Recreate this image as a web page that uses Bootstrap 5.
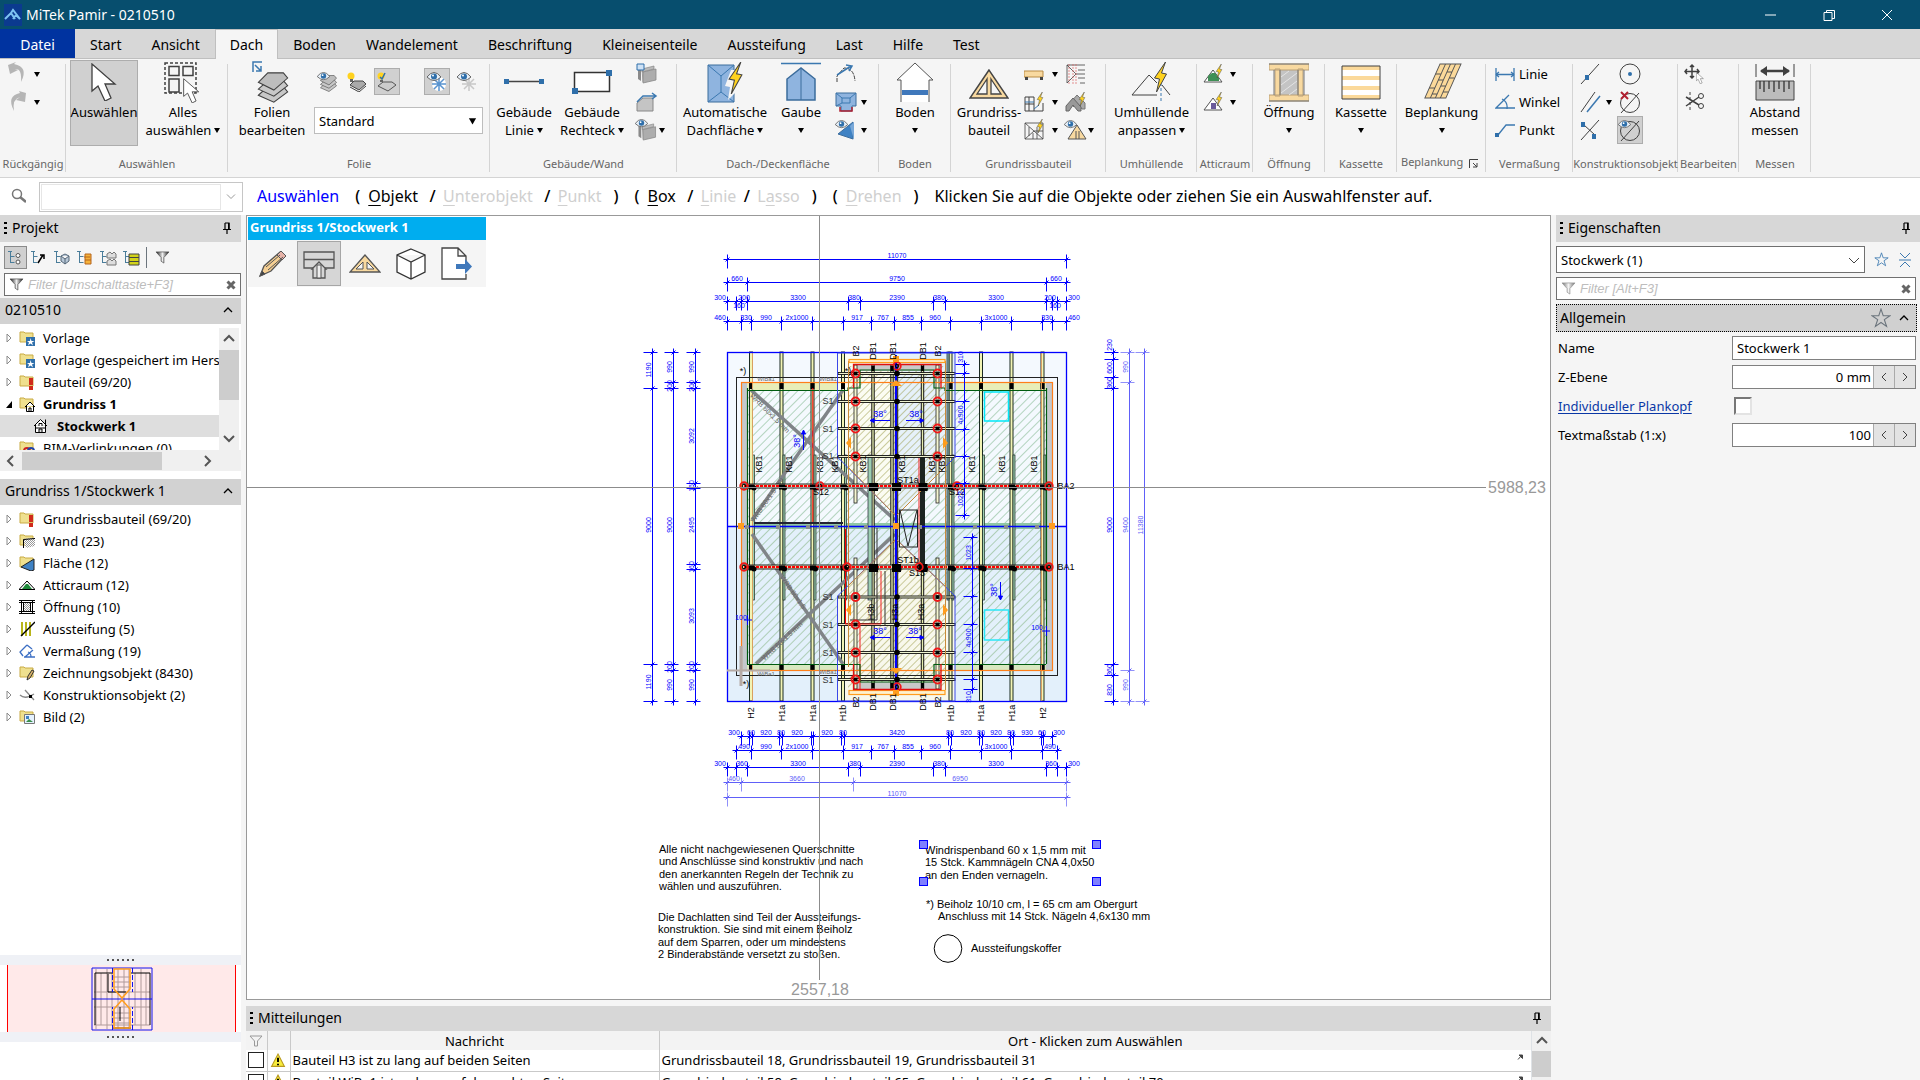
<!DOCTYPE html>
<html lang="de">
<head>
<meta charset="utf-8">
<meta name="viewport" content="width=device-width, initial-scale=1">
<title>MiTek Pamir - 0210510</title>
<link href="https://cdn.jsdelivr.net/npm/bootstrap@5.3.0/dist/css/bootstrap.min.css" rel="stylesheet">
<style>
  :root { --line:#808080; --bar:#d7d7d7; --pane:#f5f5f5; }
  body { font-family:"Noto Sans","Open Sans",sans-serif; font-size:13px; line-height:18px; color:#000; background:var(--pane); }
  button { color:inherit; font:inherit; background:none; border:1px solid transparent; padding:0; }
  svg { display:block; flex:none; }
  .k { fill:none; stroke:#404040; }
  .b { fill:none; stroke:#3b78b0; }
  .titlebar { background:#074e6e; color:#fff; height:29px; font-size:14px; }
  .titlebar button { width:58px; height:29px; }
  .tabstrip { background:var(--bar); height:30px; border-bottom:1px solid #bfbfbf; font-size:14px; }
  .tabstrip a { color:#000; text-decoration:none; padding:0 15px; line-height:31px; height:30px; border:0 solid #bfbfbf; }
  .tabstrip a.file { background:#0033a0; color:#fff; width:75px; height:29px; padding:0; text-align:center; }
  .tabstrip a.on { background:var(--pane); border-width:1px 1px 0; line-height:29px; padding:0 14px; }
  .ribbon { height:119px; border-bottom:1px solid #d4d4d4; }
  .grp { flex:none; background:linear-gradient(#d4d4d4,#d4d4d4) right 5px/1px 108px no-repeat; }
  .grp-body { height:96px; padding-top:1px; }
  .grp-name { color:#666; font-size:11px; text-align:center; white-space:nowrap; }
  .grp-name.with-launch { line-height:14px; }
  .big { display:flex; flex-direction:column; align-items:center; height:86px; white-space:nowrap; text-align:center; }
  .big.on, .sm.on, .ico.on { background:#d0d0d0; border-color:#adadad; }
  .sm { height:28px; display:flex; align-items:center; justify-content:center; width:26px; }
  .ico { width:26px; height:27px; display:flex; align-items:center; justify-content:center; }
  .dd { display:inline-block; border:3px solid transparent; border-top:5px solid #000; border-bottom:0; vertical-align:2px; margin-left:3px; }
  .dd.solo { margin:7px 0 0; }
  .g1 { width:66px } .g2 { width:162px } .g3 { width:262px } .g4 { width:187px } .g5 { width:202px } .g6 { width:72px }
  .g7 { width:155px } .g8 { width:91px } .g9 { width:56px } .g12 { width:89px } .g13 { width:87px } .g14 { width:105px } .g15 { width:61px }
  .g3 .grp-body { padding-left:10px }
  .w48 { width:48px } .w68 { width:68px } .w82 { width:82px } .w88 { width:88px }
  .folie { width:169px; height:27px; border:1px solid #bdbdbd; border-radius:0; font-size:13px; padding:0 4px; line-height:18px; color:#000;
    --bs-form-select-bg-img:url("data:image/svg+xml,%3Csvg xmlns='http://www.w3.org/2000/svg' viewBox='0 0 10 8'%3E%3Cpath d='M1 1h8L5 8z'/%3E%3C/svg%3E"); background-size:9px 8px; background-position:right 5px center; }
  .cmd { height:37px; background:#fff; font-size:16px; padding-bottom:2px; }
  .cmd .mode { color:#0000ff; }
  .cmd .dim { color:#cfcfcf; }
  .cmd u { text-underline-offset:3px; }
  .cmd .par { width:21px; text-align:center; font-weight:500; }
  .finder { width:204px; height:30px; border:1px solid #c6c6c6; padding:1px; margin:2px 14px 0 13px; }
  .finder input { border:1px solid #e6e6e6; width:180px; outline:0; }
  .dock-l { width:246px; flex:none; padding-right:5px; }
  .dock-r { width:364px; flex:none; margin-left:5px; }
  .phead { height:27px; background:var(--bar); font-size:14px; padding:0 10px 2px 4px; }
  .grip { width:3px; height:12px; margin-right:5px; background:repeating-linear-gradient(#000 0 2px,transparent 2px 5px); }
  .tb { width:23px; height:23px; display:flex; align-items:center; justify-content:center; }
  .tb.on { background:#d0d0d0; border-color:#8a8a8a; }
  .filterbox { height:23px; border:1px solid #707070; background:#fff; padding:0 4px; }
  .filterbox input { border:0; outline:0; font:italic 13px "Liberation Sans",Arial,sans-serif; flex:1; min-width:0; padding:0; }
  .filterbox input::placeholder { color:#bdbdbd; opacity:1; }
  .sec { height:26px; background:#d2d2d2; font-size:14px; padding:0 8px 2px 5px; }
  .tree { background:#fff; }
  .tree ul { padding-top:3px; }
  .tree li { height:22px; display:flex; align-items:center; white-space:nowrap; padding-left:6px; }
  .tree li > svg + svg { margin:0 8px 0 7px; }
  .tree .sel { background:#dedede; padding-left:33px; font-weight:700; }
  .tree .sel svg { margin-right:8px; }
  .treetop { height:126px; overflow:hidden; width:219px; }
  .hbar { height:21px; background:#f0f0f0; }
  .hbar .thumb { width:140px; height:18px; }
  .vbar { width:20px; background:#f0f0f0; }
  .thumb { background:#cdcdcd; }
  .split { height:10px; background:#eff1f6; }
  .split i { width:28px; height:2px; background:repeating-linear-gradient(90deg,#555 0 2px,transparent 2px 5px); }
  .mini { background:#ffe9e9; border:solid #f00; border-width:0 1px; height:67px; margin:0 5px 0 7px; }
  .tail { height:38px; }
  .cad { border:1px solid #999; background:#fff; min-height:0; position:relative; overflow:hidden; }
  .cad > svg { width:100%; height:100%; }
  .floatbar { position:absolute; left:1px; top:1px; width:238px; background:var(--pane); }
  .floatbar .cap { background:#00adef; color:#fff; font-weight:700; height:23px; line-height:20px; padding-left:2px; }
  .floatbar .tools { padding-left:2px; }
  .floatbar button { width:44px; height:45px; margin:1px; display:flex; align-items:center; justify-content:center; }
  .floatbar .on { background:#d6d6d6; border-color:#a6a6a6; }
  .cad text { font-family:"Liberation Sans",Arial,sans-serif; }
  .msgs { height:74px; margin-top:6px; flex:none; overflow:hidden; }
  .msgs .phead { height:25px; padding-bottom:1px; }
  .msgtab { width:100%; table-layout:fixed; border-collapse:collapse; font-size:13px; }
  .msgtab th { font-weight:400; text-align:center; height:19px; line-height:18px; background:#f3f3f3; padding:0; }
  .msgtab td { height:21px; line-height:20px; background:#fff; border-bottom:1px solid #c9c9c9; padding:0 0 0 2px; white-space:nowrap; }
  .msgtab th + th, .msgtab td + td { border-left:1px solid #c9c9c9; }
  .msgtab input, .plan { appearance:none; width:16px; height:16px; border:1px solid #222; background:#fff; display:block; margin:0; border-radius:0; }
  .c1 { width:21px } .c2 { width:23px } .c3 { width:369px }
  .plan { width:18px; height:18px; border:2px solid; border-color:#777 #e3e3e3 #e3e3e3 #777; margin-left:2px; }
  .objsel { height:27px; border:1px solid #707070; border-radius:0; font-size:13px; line-height:18px; padding:0 4px; color:#000; background-size:12px 12px; background-position:right 4px center;
    --bs-form-select-bg-img:url("data:image/svg+xml,%3Csvg xmlns='http://www.w3.org/2000/svg' viewBox='0 0 12 12'%3E%3Cpath d='M1 4l5 5 5-5' fill='none' stroke='%23444'/%3E%3C/svg%3E"); }
  .props { padding:0 4px 0 2px; row-gap:5px; display:grid; grid-template-columns:174px 1fr; align-items:center; grid-auto-rows:24px; margin-top:4px; }
  .props .fld { height:24px; border:1px solid #808080; background:#fff; min-width:0; }
  .props .fld input { border:0; outline:0; padding:0 4px; flex:1; min-width:0; background:none; }
  .props .num input { text-align:right; padding-right:2px; }
  .props .num button { width:21px; background:#e3e3e3; border:0; border-left:1px solid #aaa; height:22px; display:flex; align-items:center; justify-content:center; }
  .props a { color:#0a37a5; text-underline-offset:2px; }
  .allg { height:28px; border:1px dotted #000; background:#d0d0d0; font-size:14px; padding:0 3px; margin-right:3px; }
</style>
</head>
<body class="vh-100 d-flex flex-column overflow-hidden">

<svg width="0" height="0" class="position-absolute" aria-hidden="true"><defs>
  <pattern id="hg" width="6" height="6" patternUnits="userSpaceOnUse" patternTransform="rotate(45)"><path d="M0 0v6" stroke="#4f9a5f" stroke-width=".8"/></pattern>
  <pattern id="hb" width="6" height="6" patternUnits="userSpaceOnUse" patternTransform="rotate(45)"><path d="M0 0v6" stroke="#5f9a50" stroke-width=".8"/></pattern>
  <pattern id="ho" width="5" height="5" patternUnits="userSpaceOnUse" patternTransform="rotate(45)"><path d="M0 0v5" stroke="#8f8f30" stroke-width=".9"/></pattern>
  <pattern id="chk" width="2" height="2" patternUnits="userSpaceOnUse"><path d="M0 0h1v1H0zM1 1h1v1H1z" fill="#999"/></pattern>
  <linearGradient id="fun"><stop offset="0" stop-color="#111"/><stop offset=".5" stop-color="#eee"/><stop offset="1" stop-color="#111"/></linearGradient>
  <symbol id="funnel" viewBox="0 0 16 14"><path d="M1 1h14L9.500 7v6L6.500 11V7z" fill="url(#fun)" stroke="#555" stroke-width=".8"/></symbol>
  <symbol id="bolt" viewBox="0 0 14 30"><path d="M12 0L1 16l5 1-3 13L13 12l-5-1z" fill="#ffd21f" stroke="#444" stroke-width="1"/></symbol>
  <symbol id="pin" viewBox="0 0 8 12"><path d="M2 1h4v6M2 1v6M0 7.500h8M4 8v4" class="k" style="stroke:#000;stroke-width:1.200"/><path d="M5 1h1.500v6H5z"/></symbol>
  <symbol id="eye" viewBox="0 0 14 10"><path d="M0 5q7-9 14 0q-7 7-14 0z" fill="#e8f0f8" stroke="#666"/><circle cx="7" cy="4.500" r="3" fill="#2f6faa"/><circle cx="6" cy="3.500" r="1" fill="#fff"/></symbol>
  <symbol id="cur" viewBox="0 0 26 38"><path d="M1 1v27l6-5 7 15 6-3-6-14h10z" fill="#fff" stroke="#404040" stroke-width="1.300"/></symbol>
  <symbol id="lay" viewBox="0 0 36 36"><g stroke="#404040" stroke-width="1.200"><path d="M1 27l11-10h18l5 6-16 12z" fill="#c8c8c8"/><path d="M1 20l11-10h18l5 6-16 12z" fill="#c8c8c8"/><path d="M1 12l11-11h18l5 6L19 21z" fill="#bdbdbd"/></g></symbol>
  <symbol id="fold" viewBox="0 0 16 16"><path d="M1 2h4l1 1h8v9H1z" fill="#efe08f" stroke="#c9ab45"/></symbol>
  <symbol id="exp" viewBox="0 0 6 10"><path d="M1 1l4 4-4 4z" fill="#fff" stroke="#8a8a8a"/></symbol>
  <symbol id="expo" viewBox="0 0 6 10"><path d="M6 2v7H0z"/></symbol>
  <symbol id="up" viewBox="0 0 10 6"><path d="M1 5l4-4 4 4" fill="none" stroke="#000" stroke-width="1.300"/></symbol>
  <symbol id="warn" viewBox="0 0 14 14"><path d="M7 1l6 11.500H1z" fill="#f8ec3d" stroke="#b99a20"/><path d="M7 4.500v4M7 10v1.500" stroke="#000" stroke-width="1.800"/></symbol>
  <symbol id="star" viewBox="0 0 18 18"><path d="M9 1l2 6h6l-5 3.500 2 6L9 13l-5 3.500 2-6L1 7h6z" fill="none" stroke="currentColor"/></symbol>
  <symbol id="cross" viewBox="0 0 10 10"><path d="M1.500 1.500l7 7M8.500 1.500l-7 7" stroke="#666" stroke-width="3"/></symbol>
  <symbol id="jump" viewBox="0 0 6 6"><path d="M2 1h3.500v3.500zM5 1L1 5.500" stroke="#444" fill="#444"/></symbol>
  <symbol id="tre" viewBox="0 0 18 16"><path d="M3.500 1v12M1 1.500h4M3.500 6.500h4M3.500 12.500h4" fill="none" stroke="#4a7d9a"/></symbol>
  <symbol id="pk" viewBox="0 0 20 20"><path d="M1 4l3-1v14l-3-2z" fill="#8a8a8a"/><path d="M5 5l12-3v3L5 8zM5 5l1 13" fill="#bbb" stroke="#888" stroke-width=".7"/><path d="M6 8l13-3v11L6 19z" fill="#adadad" stroke="#888" stroke-width=".8"/></symbol>
</defs></svg>

<header class="titlebar d-flex align-items-center">
  <svg width="18" height="22" class="ms-1 me-1" viewBox="0 0 18 22"><path d="M0 0h18v22H0z" fill="#0b3a8f"/><path d="M1 15l6-6 4 6M7 9l2-3 7 9-4-4-3 4" fill="none" stroke="#7ec4f2" stroke-width="2"/></svg>
  <span class="flex-grow-1">MiTek Pamir - 0210510</span>
  <button aria-label="Minimieren"><svg width="12" height="12" class="mx-auto"><path d="M0 6h11" stroke="#fff"/></svg></button>
  <button aria-label="Wiederherstellen"><svg width="12" height="12" class="mx-auto"><path d="M1 3.500h8v8H1zM3.500 3.500v-2h8v8H9" fill="none" stroke="#fff"/></svg></button>
  <button aria-label="Schließen" class="me-1"><svg width="12" height="12" class="mx-auto"><path d="M1 1l10 10M11 1L1 11" stroke="#fff"/></svg></button>
</header>

<nav class="tabstrip d-flex">
  <a href="#" class="file">Datei</a><a href="#">Start</a><a href="#">Ansicht</a><a href="#" class="on">Dach</a><a href="#">Boden</a><a href="#">Wandelement</a><a href="#">Beschriftung</a><a href="#">Kleineisenteile</a><a href="#">Aussteifung</a><a href="#">Last</a><a href="#">Hilfe</a><a href="#">Test</a>
</nav>

<section class="ribbon d-flex flex-shrink-0">
  <div class="grp g1"><div class="grp-body ps-1">
    <button class="d-flex align-items-center sm w-auto" aria-label="Rückgängig"><svg width="26" height="24"><path d="M3 3l2 9 8-4-3-1q7-1 6 13q8-15-7-18l2-2z" fill="#b5b5b5"/></svg><i class="dd"></i></button>
    <button class="d-flex align-items-center sm w-auto" aria-label="Wiederholen"><svg width="26" height="24"><path d="M21 3l-1 9-9-2 4-3q-8 2-6 14q-8-15 6-18l-1-2z" fill="#b5b5b5"/></svg><i class="dd"></i></button>
  </div><div class="grp-name">Rückgängig</div></div>

  <div class="grp g2"><div class="grp-body d-flex ps-1">
    <button class="big on w68"><svg width="40" height="42"><use href="#cur" x="7" y="2" width="26" height="38"/></svg>Auswählen</button>
    <button class="big w82 ms-1"><svg width="40" height="42"><path d="M2 2h31v30H2z" class="k" stroke-dasharray="3 2" stroke-width="1.500"/><path d="M6 5.500h10v9H6zM20 5.500h10v9H20zM6 18h10v13H6z" class="k" fill="#fff" stroke-width="1.500"/><use href="#cur" x="20" y="17" width="17" height="25"/></svg>Alles<br><span>auswählen<i class="dd"></i></span></button>
  </div><div class="grp-name">Auswählen</div></div>

  <div class="grp g3"><div class="grp-body d-flex">
    <button class="big w68"><svg width="40" height="42"><use href="#lay" x="3" y="11" width="36" height="31"/><path d="M1 11V1h9M3 4l6 6M9 5v5H4" class="b" stroke-width="1.500"/></svg>Folien<br>bearbeiten</button>
    <div class="ms-1 ps-1"><div class="d-flex mt-2 mb-2 pb-1">
      <button class="ico" aria-label="Folien anzeigen"><svg width="20" height="20"><use href="#lay" x="3" y="3" width="17" height="17"/><use href="#eye" width="13" height="9"/></svg></button>
      <button class="ico ms-1" aria-label="Folien ein"><svg width="20" height="20"><path d="M3 13l4-4h9l3 3-7 6z" fill="#aaa" stroke="#444"/><path d="M3 15l9 5 7-6" fill="none" stroke="#444"/><circle cx="4" cy="4" r="3.500" fill="#ffd21f"/><path d="M3 7h3v3H3z" fill="#666"/></svg></button>
      <button class="ico on ms-1" aria-label="Folie aktiv"><svg width="20" height="20"><path d="M1 14l5-4h9l4 3-8 6z" fill="#ccc" stroke="#555"/><circle cx="4" cy="4" r="3.500" fill="#ffd21f"/><path d="M3 5l2 2 3-6" stroke="#2f6faa" fill="none" stroke-width="1.500"/><path d="M3 8h3v2H3z" fill="#666"/></svg></button>
      <button class="ico on ms-4" aria-label="Fang"><svg width="20" height="20"><circle cx="12" cy="12" r="7" fill="#fff"/><path d="M12 5v14M5 12h14M7 7l10 10M17 7L7 17" stroke="#5a94cf" stroke-width="1.500"/><use href="#eye" width="14" height="10"/></svg></button>
      <button class="ico ms-1" aria-label="Fang aus"><svg width="20" height="20"><path d="M12 5v14M5 12h14M7 7l10 10M17 7L7 17" stroke="#c8c8c8" stroke-width="1.500"/><use href="#eye" width="14" height="10"/></svg></button>
    </div>
    <select class="form-select folie" aria-label="Folie"><option>Standard</option></select></div>
  </div><div class="grp-name">Folie</div></div>

  <div class="grp g4"><div class="grp-body d-flex">
    <button class="big w68"><svg width="40" height="42"><path d="M2 20.500h36" stroke="#444" stroke-width="1.500"/><path d="M0 18h5v5H0zM35 18h5v5h-5z" fill="#2f6faa"/></svg>Gebäude<br><span>Linie<i class="dd"></i></span></button>
    <button class="big w68"><svg width="40" height="42"><path d="M2.500 11.500h35v19h-35z" fill="#fff" stroke="#333" stroke-width="1.500"/><path d="M0 27h6v6H0zM34 9h6v6h-6z" fill="#2f6faa"/></svg>Gebäude<br><span>Rechteck<i class="dd"></i></span></button>
    <div class="ms-2">
      <button class="sm" aria-label="Wand"><svg width="22" height="22"><use href="#pk" x="1" y="1" width="20" height="20"/><path d="M1 1h7v6H1z" fill="#cfe2f5" stroke="#2f6faa"/></svg></button>
      <button class="sm" aria-label="Wandform"><svg width="22" height="22"><path d="M1 20v-8l6-5h10v13z" fill="#c4c4c4" stroke="#888"/><path d="M1 11l6-6h12M16 2l4 3-4 3" class="b" stroke-width="1.500"/></svg></button>
      <button class="sm w-auto" aria-label="Wandanzeige"><svg width="24" height="22"><use href="#pk" x="2" y="3" width="20" height="19"/><use href="#eye" width="13" height="9"/></svg><i class="dd ms-0"></i></button>
    </div>
  </div><div class="grp-name">Gebäude/Wand</div></div>

  <div class="grp g5"><div class="grp-body d-flex ps-1">
    <button class="big w88"><svg width="40" height="42"><path d="M3 4h26v37H3z" fill="#8fb4df" stroke="#3b6c9c"/><path d="M3 4l13 11L29 4M16 15v16M3 41l13-10 13 10" class="b" stroke="#3b6c9c"/><path d="M26 9l-6 16 5 1-2 13 8-8V9z" fill="#f5f5f5"/><use href="#bolt" x="22" y="1" width="17" height="32"/></svg>Automatische<br><span>Dachfläche<i class="dd"></i></span></button>
    <button class="big w48 ms-2 me-1"><svg width="40" height="42"><path d="M0 2.500h40" stroke="#3b78b0" stroke-width="1.500"/><path d="M6 39V18L20 7l14 11v21z" fill="#8fb4df" stroke="#3b6c9c" stroke-width="1.500"/><path d="M20 7v32" stroke="#3b6c9c"/></svg>Gaube<br><i class="dd solo"></i></button>
    <div class="ms-1">
      <button class="sm" aria-label="Dach drehen"><svg width="22" height="22"><path d="M2 19v-6l7-8q10 0 11 13" class="k" stroke-dasharray="4 1"/><path d="M2 12L16 3M11 2l6 1-3 5" class="b" stroke-width="1.500"/></svg></button>
      <button class="sm w-auto" aria-label="Gaube"><svg width="24" height="24"><path d="M2 3h20v13h-4v5H7v-5H2z" fill="#8fb4df" stroke="#3b6c9c"/><path d="M2 3l6 5h8l6-5M8 8v5h8V8M2 16l6-3" class="b"/><path d="M6 17v4h12v-4" stroke="#b02030" stroke-width="1.500" fill="none"/></svg><i class="dd"></i></button>
      <button class="sm w-auto" aria-label="Flächenanzeige"><svg width="24" height="24"><path d="M4 16L19 4v17z" fill="#3f82c4" stroke="#3b6c9c"/><path d="M16 8l4-4v18z" fill="#79a8d8"/><use href="#eye" x="1" y="2" width="13" height="9"/></svg><i class="dd"></i></button>
    </div>
  </div><div class="grp-name">Dach-/Deckenfläche</div></div>

  <div class="grp g6"><div class="grp-body d-flex justify-content-center">
    <button class="big"><svg width="40" height="42"><path d="M6 41V19H2L20 2l18 17h-4v22" fill="#fff" stroke="#555"/><path d="M7 29h26v5H7z" fill="#3f78bb"/></svg>Boden<br><i class="dd solo"></i></button>
  </div><div class="grp-name">Boden</div></div>

  <div class="grp g7"><div class="grp-body d-flex ps-1">
    <button class="big w68"><svg width="40" height="42"><path d="M20 9L1 37h38z" fill="#f8d9a0" stroke="#444" stroke-width="1.500"/><path d="M18 18L8 33h10zM22 18l10 15H22z" fill="#f5f5f5" stroke="#444" stroke-width="1.300"/></svg>Grundriss-<br>bauteil</button>
    <div>
      <button class="sm w-auto" aria-label="Balken"><svg width="20" height="22"><path d="M0 8h19v6H0z" fill="#f8d9a0" stroke="#b98b45"/><path d="M1 14h3v3H1zM16 14h3v3h-3z" fill="#444"/></svg><i class="dd ms-2"></i></button>
      <button class="sm w-auto" aria-label="Bauteil automatisch"><svg width="20" height="22"><path d="M1 6h9v14H1zM5 6v14M1 13h9M10 20h9V12" class="k"/><path d="M1 11h9M10 18l5-4" class="b"/><use href="#bolt" x="12" y="1" width="8" height="14"/></svg><i class="dd ms-2"></i></button>
      <button class="sm w-auto" aria-label="Lage automatisch"><svg width="20" height="22"><path d="M1 4h18v16H1zM1 4l9 8 9 8M1 20l9-8h9M5 8v9M9 14v6M13 8v12" class="k" stroke-width=".8"/><use href="#bolt" x="12" y="0" width="8" height="14"/></svg><i class="dd ms-2"></i></button>
    </div>
    <div class="ms-1">
      <button class="sm" aria-label="Walm"><svg width="22" height="22"><path d="M2 2v18M2 2h18M2 20l9-9L2 2M11 11h9M20 7h-7M20 15h-7M20 20h-5" class="k" stroke-width=".8"/><path d="M4 1v20M8 1v20M11 1v20" stroke="#d66" stroke-dasharray="2 1" stroke-width=".7"/></svg></button>
      <button class="sm" aria-label="Binderreihe"><svg width="22" height="22"><path d="M5 12l7-8 8 8v6h-3l-5-6-4 4" fill="#aaa" stroke="#777"/><path d="M1 15l7-8 8 9v4h-3l-5-6-4 6H1z" fill="#999" stroke="#666"/><use href="#bolt" x="13" y="1" width="8" height="14"/></svg></button>
      <button class="sm w-auto" aria-label="Binderanzeige"><svg width="24" height="22"><path d="M13 6L4 20h18z" fill="#f8d9a0" stroke="#555"/><path d="M12 12v8M15 12v8" stroke="#555"/><use href="#eye" x="0" y="1" width="13" height="9"/></svg><i class="dd ms-0"></i></button>
    </div>
  </div><div class="grp-name">Grundrissbauteil</div></div>

  <div class="grp g8"><div class="grp-body d-flex justify-content-center">
    <button class="big"><svg width="40" height="42"><path d="M1 34L18 14l8 8M1 34h25M31 24l8 10" class="k"/><path d="M30 22v18" class="b" stroke-dasharray="3 2"/><use href="#bolt" x="21" y="1" width="17" height="30"/></svg>Umhüllende<br><span>anpassen<i class="dd"></i></span></button>
  </div><div class="grp-name">Umhüllende</div></div>

  <div class="grp g9"><div class="grp-body ps-1">
    <button class="sm w-auto" aria-label="Atticraum"><svg width="24" height="22"><path d="M2 19L11 7l9 12z" fill="#fff" stroke="#555"/><path d="M6 18v-5l4-3h3l4 5v3z" fill="#3f8f55"/><use href="#bolt" x="13" y="1" width="8" height="14"/></svg><i class="dd ms-1"></i></button>
    <button class="sm w-auto" aria-label="Atticraum automatisch"><svg width="24" height="22"><path d="M2 19L11 7l9 12z" fill="#fff" stroke="#555"/><path d="M9 18v-6h5v6z" fill="#6a5a9a"/><use href="#bolt" x="13" y="1" width="8" height="14"/></svg><i class="dd ms-1"></i></button>
  </div><div class="grp-name">Atticraum</div></div>

  <div class="grp g6"><div class="grp-body d-flex justify-content-center">
    <button class="big"><svg width="40" height="42"><path d="M11 8h18v27H11z" fill="#c4c4c4"/><path d="M6 8h5v27H6zM29 8h5v27h-5zM0 3h40v6H0zM0 34h40v6H0z" fill="#f8d9a0" stroke="#b9a078"/><path d="M5 9v25M11 9v25M29 9v25M35 9v25M0 3h40M0 40h40" stroke="#777"/><path d="M12 16l8-6M12 24l16-12M12 32l16-12M20 34l8-6" stroke="#e4e4e4"/></svg>Öffnung<br><i class="dd solo"></i></button>
  </div><div class="grp-name">Öffnung</div></div>

  <div class="grp g6"><div class="grp-body d-flex justify-content-center">
    <button class="big"><svg width="40" height="42"><path d="M1 5h38v33H1z" fill="#fff"/><path d="M1 5h38v4H1zM1 15h38v4H1zM1 25h38v4H1zM1 34h38v4H1z" fill="#fbd99a"/><path d="M1 5h38v33H1z" class="k"/></svg>Kassette<br><i class="dd solo"></i></button>
  </div><div class="grp-name">Kassette</div></div>

  <div class="grp g12"><div class="grp-body d-flex justify-content-center">
    <button class="big"><svg width="40" height="42"><g transform="translate(18 3) skewX(-24)" stroke="#555"><path d="M0 0h21v34H0z" fill="#fbd99a"/><path d="M5.500 0v34M10.500 0v34M15.500 0v34M0 10h5M0 24h5M5.500 16h5M5.500 30h5M10.500 8h5M10.500 22h5M15.500 14h5M15.500 28h5" fill="none"/></g></svg>Beplankung<br><i class="dd solo"></i></button>
  </div><div class="grp-name with-launch d-flex justify-content-between ps-1 pe-2"><span>Beplankung</span><svg width="9" height="9" class="mt-1"><path d="M.5 9V.5H9M4 4l4 4M8 4v4H4" class="k" stroke="#888"/></svg></div></div>

  <div class="grp g13"><div class="grp-body ps-2">
    <button class="sm w-auto"><svg width="20" height="20" class="me-1"><path d="M1 4v13M19 4v13M1 10.500h18M4 8l-3 2.500L4 13M16 8l3 2.500-3 2.500" class="b" stroke-width="1.300"/></svg>Linie</button>
    <button class="sm w-auto"><svg width="20" height="20" class="me-1"><path d="M14 3L1 16h19M7 7q6 3 5 10" class="b" stroke-width="1.300"/></svg>Winkel</button>
    <button class="sm w-auto"><svg width="20" height="20" class="me-1"><path d="M3 15L11 5h9" class="b" stroke-width="1.300"/><path d="M0 13h4v4H0z" fill="#2f6faa"/></svg>Punkt</button>
  </div><div class="grp-name">Vermaßung</div></div>

  <div class="grp g14"><div class="grp-body d-flex ps-1">
    <div>
      <button class="sm" aria-label="Hilfslinie"><svg width="20" height="22"><path d="M1 21L19 1" class="k"/><path d="M5 12h4v5H5z" fill="#2f6faa"/></svg></button>
      <button class="sm w-auto" aria-label="Parallele"><svg width="24" height="22"><path d="M3 21L17 1" class="k"/><path d="M9 21L22 5" class="b" stroke-width="1.500"/></svg><i class="dd ms-1"></i></button>
      <button class="sm" aria-label="Senkrechte"><svg width="20" height="22"><path d="M1 21L19 1M4 6l11 10" class="k"/><path d="M1 3h4v5H1zM12 15h4v5h-4z" fill="#2f6faa"/></svg></button>
    </div>
    <div class="ms-1">
      <button class="sm" aria-label="Kreis"><svg width="24" height="24"><circle cx="12" cy="12" r="10" class="k" fill="#fff"/><circle cx="12" cy="12" r="2" fill="#2f6faa"/></svg></button>
      <button class="sm" aria-label="Alle löschen"><svg width="24" height="24"><circle cx="12" cy="13" r="9.500" class="k"/><path d="M3 23L21 3" class="k"/><path d="M3 2l7 7M10 2L3 9" stroke="#b02030" stroke-width="2"/></svg></button>
      <button class="sm on" aria-label="Alle anzeigen"><svg width="24" height="24"><circle cx="12" cy="13" r="9.500" class="k"/><path d="M3 23L21 3" class="k"/><use href="#eye" x="0" y="2" width="13" height="9"/></svg></button>
    </div>
  </div><div class="grp-name">Konstruktionsobjekt</div></div>

  <div class="grp g15"><div class="grp-body ps-1">
    <button class="sm" aria-label="Verschieben"><svg width="22" height="22"><path d="M8 2v13M1 8.500h14M6 4l2-2 2 2M6 13l2 2 2-2M3 6L1 8.500 3 11M13 6l2 2.500-2 2.500" class="k" stroke-width="1.500"/><use href="#cur" x="12" y="9" width="8" height="12"/></svg></button>
    <button class="sm" aria-label="Trennen"><svg width="22" height="22"><path d="M6 1v20" class="k" stroke-dasharray="3 2"/><path d="M2 6l13 8M2 15l13-9" class="k" stroke-width="1.500"/><circle cx="17" cy="5" r="2.500" class="k"/><circle cx="17" cy="15" r="2.500" class="k"/></svg></button>
  </div><div class="grp-name">Bearbeiten</div></div>

  <div class="grp g6"><div class="grp-body d-flex justify-content-center">
    <button class="big"><svg width="40" height="42"><path d="M1 3v13M39 3v13" class="k"/><path d="M6 10h28" stroke="#404040" stroke-width="2.500"/><path d="M5 10l7-5v10zM35 10l-7-5v10z" fill="#404040"/><path d="M1 20h38v19H1z" fill="#bcbcbc" stroke="#444"/><path d="M5 20v8M9 20v11M14 20v8M19 20v11M24 20v8M29 20v11M34 20v8" stroke="#333" stroke-width="1.300"/></svg>Abstand<br>messen</button>
  </div><div class="grp-name">Messen</div></div>
</section>

<section class="cmd d-flex align-items-center flex-shrink-0">
  <svg width="18" height="18" class="ms-2"><circle cx="9" cy="7" r="4.500" fill="none" stroke="#777" stroke-width="1.500"/><path d="M12 10l6 5" stroke="#777" stroke-width="2.500"/></svg>
  <div class="finder d-flex"><input aria-label="Suche"><button class="flex-grow-1" aria-label="Liste öffnen"><svg width="10" height="6" class="mx-auto"><path d="M1 .5l4 4 4-4" fill="none" stroke="#999"/></svg></button></div>
  <span class="text-nowrap mode">Auswählen</span>
  <div class="d-flex text-nowrap ms-2"><span class="par">(</span><span><u>O</u>bjekt</span><span class="par ms-1">/</span><span class="dim"><u>U</u>nterobjekt</span><span class="par ms-1">/</span><span class="dim"><u>P</u>unkt</span><span class="par ms-1">)</span><span class="par">(</span><span><u>B</u>ox</span><span class="par ms-1">/</span><span class="dim"><u>L</u>inie</span><span class="par">/</span><span class="dim">L<u>a</u>sso</span><span class="par ms-1">)</span><span class="par">(</span><span class="dim"><u>D</u>rehen</span><span class="par ms-1">)</span></div>
  <span class="ms-2 text-nowrap">Klicken Sie auf die Objekte oder ziehen Sie ein Auswahlfenster auf.</span>
</section>

<main class="d-flex flex-grow-1" style="min-height:0">
  <aside class="dock-l d-flex flex-column">
    <div class="phead d-flex align-items-center"><i class="grip"></i><span class="flex-grow-1">Projekt</span><svg width="8" height="12"><use href="#pin"/></svg></div>
    <div class="d-flex align-items-center ps-1 py-1">
      <button class="tb on" aria-label="Struktur"><svg width="18" height="16"><use href="#tre"/><g fill="#fff" stroke="#555"><circle cx="11" cy="5.500" r="2"/><circle cx="11" cy="12" r="2"/></g></svg></button>
      <button class="tb" aria-label="Verweise"><svg width="18" height="16"><use href="#tre"/><path d="M8 13l5-8M10 5h4v4" stroke="#000" fill="none" stroke-width="1.500"/></svg></button>
      <button class="tb" aria-label="Körper"><svg width="18" height="16"><use href="#tre"/><path d="M12 4l4 2v5l-4 3-4-3V6zM8 6l4 3 4-3M12 9v5" fill="#b8c8d8" stroke="#567"/></svg></button>
      <button class="tb" aria-label="Holzlisten"><svg width="18" height="16"><use href="#tre"/><path d="M9 4h6v10H9zM8 7h6M9 10h6" fill="#f5b23a" stroke="#b5651d"/></svg></button>
      <button class="tb" aria-label="Gebäude"><svg width="18" height="16"><use href="#tre"/><path d="M8 8V4l3-2 2 2 2-2 2 2v4zM8 15v-4l3-2 2 2 2-2 2 2v4z" fill="#ddd" stroke="#777"/></svg></button>
      <button class="tb" aria-label="Folienliste"><svg width="18" height="16"><use href="#tre"/><path d="M7 4h10v11H7z" fill="#d2d31a" stroke="#444"/><path d="M7 7.500h10M7 11.500h10" stroke="#444"/></svg></button>
      <i class="border-start border-secondary ms-1" style="height:21px"></i>
      <button class="tb ms-1" aria-label="Filter"><svg width="15" height="13"><use href="#funnel"/></svg></button>
    </div>
    <div class="filterbox d-flex align-items-center ms-1"><svg width="15" height="13" class="me-1"><use href="#funnel"/></svg><input aria-label="Projektfilter" placeholder="Filter [Umschalttaste+F3]"><svg width="10" height="10"><use href="#cross"/></svg></div>
    <div class="sec d-flex align-items-center" style="margin-top:2px"><span class="flex-grow-1">0210510</span><svg width="10" height="6"><use href="#up"/></svg></div>
    <div class="tree d-flex">
      <ul class="list-unstyled mb-0 treetop">
        <li><svg width="6" height="10"><use href="#exp"/></svg><svg width="16" height="16"><use href="#fold"/><path d="M7 7h9v9H7z" fill="#2f6faa"/><path d="M11.500 8l1 3h3l-2.500 1.500 1 3-2.500-2-2.500 2 1-3L8 11h3z" fill="#fff"/></svg>Vorlage</li>
        <li><svg width="6" height="10"><use href="#exp"/></svg><svg width="16" height="16"><use href="#fold"/><path d="M7 7h9v9H7z" fill="#2f6faa"/><path d="M11.500 8l1 3h3l-2.500 1.500 1 3-2.500-2-2.500 2 1-3L8 11h3z" fill="#fff"/></svg>Vorlage (gespeichert im Herst</li>
        <li><svg width="6" height="10"><use href="#exp"/></svg><svg width="16" height="16"><use href="#fold"/><path d="M10 4h4v7h-4zM10 12h4v4h-4z" fill="#d02a1a"/></svg>Bauteil (69/20)</li>
        <li class="fw-bold"><svg width="6" height="10"><use href="#expo"/></svg><svg width="16" height="16"><use href="#fold"/><path d="M6 11l5-5 5 5M7.500 10v5.500h7V10M10 15v-3h2v3" fill="#fff" stroke="#000"/></svg>Grundriss 1</li>
        <li class="sel"><svg width="16" height="16"><path d="M1 8l6.500-6.500L14 8M12.500 6V1.500M2.500 7v7.500h10V7M2.500 10h10M6 14v-3h3v3M6 8V5.500h3V8" fill="#fff" stroke="#000"/></svg>Stockwerk 1</li>
        <li><svg width="6" height="10"></svg><svg width="16" height="16"><use href="#fold"/><circle cx="8" cy="11" r="3" stroke="#c22" fill="none" stroke-width="2"/><circle cx="12" cy="11" r="3" stroke="#24a" fill="none" stroke-width="2"/></svg>BIM-Verlinkungen (0)</li>
      </ul>
      <div class="vbar d-flex flex-column align-items-center mt-1"><svg width="12" height="18" class="mt-1"><path d="M1 9l5-5 5 5" fill="none" stroke="#555" stroke-width="2"/></svg><div class="thumb w-100 flex-grow-1"></div><svg width="12" height="50"><path d="M1 36l5 5 5-5" fill="none" stroke="#555" stroke-width="2"/></svg></div>
    </div>
    <div class="d-flex align-items-center hbar"><svg width="22" height="12"><path d="M13 1L8 6l5 5" fill="none" stroke="#555" stroke-width="2"/></svg><div class="thumb"></div><svg width="54" height="12"><path d="M43 1l5 5-5 5" fill="none" stroke="#555" stroke-width="2"/></svg></div>
    <div class="bg-white pt-2"><div class="sec d-flex align-items-center"><span class="flex-grow-1">Grundriss 1/Stockwerk 1</span><svg width="10" height="6"><use href="#up"/></svg></div></div>
    <div class="tree flex-grow-1 overflow-hidden">
      <ul class="list-unstyled mb-0">
        <li><svg width="6" height="10"><use href="#exp"/></svg><svg width="16" height="16"><use href="#fold"/><path d="M10 4h4v7h-4zM10 12h4v4h-4z" fill="#d02a1a"/></svg>Grundrissbauteil (69/20)</li>
        <li><svg width="6" height="10"><use href="#exp"/></svg><svg width="16" height="16"><use href="#fold"/><path d="M4 6l12-1v8l-9 2z" fill="#fff"/><path d="M4 6l12-1v8l-9 2z" fill="url(#chk)"/><path d="M4.500 15V6.500L16 5.500" fill="none" stroke="#000"/></svg>Wand (23)</li>
        <li><svg width="6" height="10"><use href="#exp"/></svg><svg width="16" height="16"><use href="#fold"/><path d="M2 12L15 4v11l-3 1z" fill="#3f82c4" stroke="#222"/></svg>Fläche (12)</li>
        <li><svg width="6" height="10"><use href="#exp"/></svg><svg width="16" height="16"><path d="M0 12.500L8 4l8 8.500z" fill="#fff" stroke="#000"/><path d="M3 12l4-5h2l4 5z" fill="#1d8a3a"/></svg>Atticraum (12)</li>
        <li><svg width="6" height="10"><use href="#exp"/></svg><svg width="16" height="16"><path d="M4 3h8v10H4z" fill="url(#chk)"/><path d="M0 1.500h16M0 14.500h16M2.500 2v12M13.500 2v12M4.500 4v8M11.500 4v8M0 3.500h16M0 12.500h16" stroke="#000"/></svg>Öffnung (10)</li>
        <li><svg width="6" height="10"><use href="#exp"/></svg><svg width="16" height="16"><path d="M3 1v14M7 1v14M11 1v14" stroke="#b8b41a" stroke-width="2"/><path d="M2 15L16 1" stroke="#000" stroke-width="1.500"/></svg>Aussteifung (5)</li>
        <li><svg width="6" height="10"><use href="#exp"/></svg><svg width="16" height="16"><path d="M8 2L1 9l3 4M8 2l5 4M6 14l8-7M5 14h11M9 9q3 1 3 5" fill="none" stroke="#3c6fc4" stroke-width="1.300"/></svg>Vermaßung (19)</li>
        <li><svg width="6" height="10"><use href="#exp"/></svg><svg width="16" height="16"><use href="#fold"/><path d="M8 15l1-4 4-6 2 1-4 7z" fill="#d9b26a" stroke="#333"/></svg>Zeichnungsobjekt (8430)</li>
        <li><svg width="6" height="10"><use href="#exp"/></svg><svg width="16" height="16"><path d="M1 8q5 5 14-1M6 3l9 10" fill="none" stroke="#888" stroke-width="1.300"/><path d="M10 8h3v3h-3z"/></svg>Konstruktionsobjekt (2)</li>
        <li><svg width="6" height="10"><use href="#exp"/></svg><svg width="16" height="16"><use href="#fold"/><path d="M5.500 5.500h10v9h-10z" fill="#e5f2ff" stroke="#777"/><path d="M7 13l3-3 4 3z" fill="#3a8f4a"/><path d="M7 7h3v3H7z" fill="#3f82c4"/></svg>Bild (2)</li>
      </ul>
    </div>
    <div class="split d-flex justify-content-center align-items-center"><i></i></div>
    <div class="bg-white"><div class="mini d-flex justify-content-center align-items-center"><svg width="62" height="64" viewBox="0 0 62 64"><path d="M5 2v60M10 6v52M16 2v60M21 6v52M27 2v60M33 2v60M38 2v60M44 6v52M50 2v60M55 6v52M3 25h56M3 40h56M3 58h56M22 10h18M22 15h18M22 20h18M22 46h18M22 51h18M22 56h18" stroke="#b09a9a" fill="none"/><path d="M4 58V6h18M40 6h19v52M17 7v18h18M29 40v14M22 61h18" fill="none" stroke="#000"/><path d="M1 1h60v62H1zM1 32h60" fill="none" stroke="#11e"/><path d="M21.500 1v24M41.500 1v24M21.500 63V40M41.500 63V40" stroke="#11e" stroke-dasharray="5 2"/><path d="M23 2h16v20l-8 9-8-9zM23 61V42l8-9 8 9v19z" fill="none" stroke="#ff9d1e" stroke-width="1.500"/></svg></div></div>
    <div class="split d-flex justify-content-center align-items-center"><i></i></div>
    <div class="bg-white tail"></div>
  </aside>

  <div class="d-flex flex-column flex-grow-1" style="min-width:0">
    <div class="cad flex-grow-1">
      <svg role="img" aria-label="Grundriss Stockwerk 1"><g id="plan" transform="translate(-247 -216)"></g></svg>
      <div class="floatbar"><div class="cap">Grundriss 1/Stockwerk 1</div>
        <div class="d-flex tools">
          <button aria-label="Zeichnen"><svg width="30" height="30"><path d="M2 27l4-10L22 3l5 4-14 15z" fill="#f5cf93" stroke="#555" stroke-width="1.300"/><path d="M19 6l5 5 4-4-5-5z" fill="#e6b3a8" stroke="#555"/><path d="M2 27l2-5 3 3zM8 18L22 6M10 21L25 8" stroke="#555" fill="#444"/></svg></button>
          <button class="on" aria-label="Grundriss"><svg width="32" height="30"><path d="M1 3h30v16H1zM1 10.500h30" fill="none" stroke="#555" stroke-width="1.300"/><path d="M9 20l7-7 7 7h-1v9H10v-9z" fill="#d6d6d6" stroke="#555" stroke-width="1.300"/><path d="M14 29V16h4v13z" fill="#eee" stroke="#555"/></svg></button>
          <button aria-label="Binder"><svg width="32" height="22"><path d="M16 2L1 19h30z" fill="#f8d9a0" stroke="#555" stroke-width="1.300"/><path d="M14 9l-7 7h7zM18 9l7 7h-7z" fill="#f5f5f5" stroke="#555"/></svg></button>
          <button aria-label="3D"><svg width="32" height="32"><path d="M16 1l14 6v17l-14 7L2 24V7zM2 7l14 7 14-7M16 14v17" fill="#fff" stroke="#333" stroke-width="1.300"/></svg></button>
          <button aria-label="Export"><svg width="34" height="34"><path d="M26 27v5H2V1h16l8 8v5M18 1v8h8" fill="#fff" stroke="#444" stroke-width="1.300"/><path d="M16 17h9v-5l7 7.500-7 7.500v-5h-9z" fill="#3f78bb"/></svg></button>
        </div></div>
    </div>
    <div class="msgs">
      <div class="phead d-flex align-items-center"><i class="grip"></i><span class="flex-grow-1">Mitteilungen</span><svg width="8" height="12"><use href="#pin"/></svg></div>
      <div class="d-flex">
        <table class="msgtab">
          <colgroup><col class="c1"><col class="c2"><col class="c3"><col></colgroup>
          <thead><tr><th><svg width="14" height="12" class="mx-auto"><path d="M1 1h12L8.500 6v5h-3V6z" fill="none" stroke="#999"/></svg></th><th></th><th>Nachricht</th><th>Ort - Klicken zum Auswählen</th></tr></thead>
          <tbody>
            <tr><td><input type="checkbox" aria-label="Meldung 1"></td><td><svg width="16" height="15"><use href="#warn"/></svg></td><td>Bauteil H3 ist zu lang auf beiden Seiten</td><td><div class="d-flex justify-content-between pe-2">Grundrissbauteil 18, Grundrissbauteil 19, Grundrissbauteil 31<svg width="6" height="6" class="mt-1"><use href="#jump"/></svg></div></td></tr>
            <tr><td><input type="checkbox" aria-label="Meldung 2"></td><td><svg width="16" height="15"><use href="#warn"/></svg></td><td>Bauteil WiBa1 ist zu lang auf der rechten Seite</td><td><div class="d-flex justify-content-between pe-2">Grundrissbauteil 58, Grundrissbauteil 65, Grundrissbauteil 61, Grundrissbauteil 70<svg width="6" height="6" class="mt-1"><use href="#jump"/></svg></div></td></tr>
          </tbody>
        </table>
        <div class="vbar flex-shrink-0 border-start"><svg width="19" height="20"><path d="M5 12l5-5 5 5" fill="none" stroke="#555" stroke-width="2"/></svg><div class="thumb" style="height:26px"></div></div>
      </div>
    </div>
  </div>

  <aside class="dock-r">
    <div class="phead d-flex align-items-center"><i class="grip"></i><span class="flex-grow-1">Eigenschaften</span><svg width="8" height="12"><use href="#pin"/></svg></div>
    <div class="d-flex align-items-center py-1">
      <select class="form-select objsel flex-grow-1 w-auto" aria-label="Objekt"><option>Stockwerk (1)</option></select>
      <button class="ms-2" style="color:#3b78b0" aria-label="Favoriten"><svg width="15" height="15"><use href="#star"/></svg></button>
      <button class="ms-2 me-2" aria-label="Zuklappen"><svg width="12" height="14"><path d="M1 0l5 5 5-5M1 14l5-5 5 5M0 7h12" class="b"/></svg></button>
    </div>
    <div class="filterbox d-flex align-items-center me-1"><svg width="15" height="13" class="me-1" opacity=".6"><use href="#funnel"/></svg><input aria-label="Eigenschaftenfilter" placeholder="Filter [Alt+F3]"><svg width="10" height="10"><use href="#cross"/></svg></div>
    <div class="allg d-flex align-items-center mt-1"><span class="flex-grow-1">Allgemein</span><svg width="20" height="20" class="me-2 text-secondary"><use href="#star"/></svg><svg width="10" height="6" class="me-1"><use href="#up"/></svg></div>
    <div class="props">
      <label for="pName">Name</label><div class="fld d-flex"><input id="pName" value="Stockwerk 1"></div>
      <label for="pZ">Z-Ebene</label><div class="fld num d-flex"><input id="pZ" value="0 mm"><button aria-label="Z verringern"><svg width="6" height="10"><path d="M5 1L1 5l4 4" class="k"/></svg></button><button aria-label="Z erhöhen"><svg width="6" height="10"><path d="M1 1l4 4-4 4" class="k"/></svg></button></div>
      <a href="#">Individueller Plankopf</a><input type="checkbox" class="plan" aria-label="Individueller Plankopf">
      <label for="pT">Textmaßstab (1:x)</label><div class="fld num d-flex"><input id="pT" value="100"><button aria-label="Maßstab verringern"><svg width="6" height="10"><path d="M5 1L1 5l4 4" class="k"/></svg></button><button aria-label="Maßstab erhöhen"><svg width="6" height="10"><path d="M1 1l4 4-4 4" class="k"/></svg></button></div>
    </div>
  </aside>
</main>

<script src="https://cdn.jsdelivr.net/npm/bootstrap@5.3.0/dist/js/bootstrap.bundle.min.js"></script>
<script>
// Builds the plan drawing from its beam axes, dimension chains and labels.
const out = [];
const L = (x1,y1,x2,y2,c,w=1,x='') => out.push(`<line x1="${x1}" y1="${y1}" x2="${x2}" y2="${y2}" stroke="${c}" stroke-width="${w}" ${x}/>`);
const R = (x1,y1,x2,y2,f,s='none',w=1,x='') => out.push(`<rect x="${x1}" y="${y1}" width="${x2-x1}" height="${y2-y1}" fill="${f}" stroke="${s}" stroke-width="${w}" ${x}/>`);
const P = (d,f,s,w=1) => out.push(`<path d="${d}" fill="${f}" stroke="${s}" stroke-width="${w}"/>`);
const T = (x,y,t,o={}) => out.push(`<text x="${x}" y="${y}" font-size="${o.s||8}" fill="${o.c||'#000'}" text-anchor="${o.a||'middle'}" dominant-baseline="central" ${o.r!==undefined?`transform="rotate(${o.r} ${x} ${y})"`:''}>${t}</text>`);
const BL='#0000ff', FD='#6060f8';

// roof surfaces
R(727.5,352.5,1066.5,526.5,'#f4f9fe');
R(727.5,526.5,1066.5,701.5,'#e3f0fb');
R(747,391,1046,526,'url(#hg)'); R(747,526,1046,664,'url(#hb)');
R(741,382,747,670,'#c4c8cc'); R(1046,382,1052,670,'#c4c8cc');
R(747,382,848,391,'#e8eeb8'); R(945,382,1046,391,'#e8eeb8');
R(747,664,860,671,'#d8e8c0'); R(934,664,1046,671,'#d8e8c0');
R(747,523,1046,529,'#8fc7a5');

// central dormers
P('M838 353H955V457L896 516L838 457Z','#fbfcf2','none'); P('M896 353H955V457L896 516Z','#e6f1fa','none');
P('M838 701H955V596L896 539L838 596Z','#f8f8ec','none');
P('M848 366H945V467L896 516L848 467Z','url(#ho)','none'); P('M848 688H945V586L896 539L848 586Z','url(#ho)','none');
R(853,365,941,371,'#c9c9c9'); R(853,682,941,689,'#c9c9c9');

// rafters
[751,781.5,812.5,843,950.5,981,1011.5,1042.5].forEach(x=>{
  R(x-1.5,352,x+1.5,701,'#f2f4b4','#1a2a22',1);
  R(x+1.5,455,x+3.5,600,'#9dceb2','#1a2a22',.7);
  R(x-2,383,x+2,389,'#000'); R(x-2,664,x+2,670,'#000');
});
L(1041.5,352,1041.5,701,'#d9a060'); L(752.5,352,752.5,701,'#d9a060');
// wind bracing straps
[[751,390,895,520],[843,390,752,520],[752,534,843,664],[895,534,756,664]].forEach(a=>L(...a,'#808488',3.5));
T(770,413,'WRB 60x1.5 mm',{s:7,c:'#666',r:45}); T(767,500,'WRB 60x1.5 mm',{s:7,c:'#666',r:-55});
T(782,641,'WRB 60x1.5 mm',{s:7,c:'#666',r:-43}); T(793,592,'WRB 60x1.5',{s:7,c:'#666',r:55});
[855.5,937.5].forEach(x=>{R(x-1.5,365,x+1.5,503,'#f5f7d2','#222',.8); R(x-1.5,558,x+1.5,689,'#f5f7d2','#222',.8);});
[873,892,896.500,922.500].forEach(x=>R(x-1.2,365,x+1.2,689,'#e6edb0','#111',1));
R(868,455,872,600,'#9dceb2','#223',.7); R(920,456,925,564,'#1b2420'); L(919,456,919,564,'#e22');
R(947,352,949,600,'#8fb8a8','#234',.8);
// purlins of the dormers
[373.5,401.5,428.5,456.5].forEach(y=>R(838,y-1,955,y+1,'#eef3d0','#111',.9));
[597,624.5,652.5,679.5].forEach(y=>R(838,y-1,955,y+1,'#eef3d0','#111',.9));
// collar purlins
[487,568].forEach(y=>{R(741,y-3,1052,y+1,'#e7d5b8','#111',.9); L(744,y-1,1052,y-1,'#f00',2,'stroke-dasharray="3 1"');});
L(812.8,388,812.8,523,'#f00'); L(845.5,529,845.5,624,'#f00');
P('M860 689V625H848M845 624H881V571','none','#e22'); P('M877 528V565M877 571V620H850M885 571V625','none','#333');
L(754,523,843,523,'#223',2);
// outlines
R(727.5,352.5,1066.5,701.5,'none',BL,1.3); L(727,526.5,1066,526.5,BL,1.3);
R(736.5,377.5,1057.5,675.5,'none','#222'); R(741.5,382.5,1052.5,670.5,'none','#ff7f1a',1.2);
P('M747.5 388V664M1046.500 388V664M747 390.500H848V388H860V370H934V388H945V390.500H1046M747 664.500H860V682H934V664.500H1046','none','#005c10',1.2);
P('M837.500 353V457L896 516L955 457V353ZM837.500 701V596L896 539L955 596V701Z','none','#3a48e8');
P('M848.500 361V667M945.500 361V690M848 467L896 516L945 467M848 586L896 539L945 586','none','#c98a3a');
R(849,359.500,945,362.500,'#fff2cc','#ff9d1e',1.2); R(849,690.500,945,694.500,'#fff2cc','#ff9d1e',1.2);
P('M853.500 388V364.500H941V388M853.500 664V689.500H941V664','none','#e01010',1.3);
L(896,355,896,695,BL,2);
R(899.500,510,917.500,547,'none','#222'); P('M900 510L908 546L917 510','none','#222');
// roof windows
R(984.500,392,1008.500,421,'none','#00e8f8',1.5); R(984.500,610,1008.500,640,'none','#2ae8f8',1.5);
// nodes
[751,781.500,812.500,843,873,896,922.500,950.500,981,1011.500,1042.500].forEach((x,i)=>[487,568].forEach(y=>{const r=(i>3&&i<7)?4:2.5; R(x-r,y-r,x+r+1,y+r,'#000'); out.push(`<circle cx="${x+3}" cy="${y+1}" r="2.500"/>`);}));
[373.500,401.500,428.500,456.500,597,624.500,652.500,679.500].forEach(y=>{[855.500,937.500].forEach(x=>out.push(`<circle cx="${x}" cy="${y}" r="4" fill="none" stroke="#f01818" stroke-width="1.800"/><circle cx="${x}" cy="${y}" r="2"/>`)); out.push(`<circle cx="897" cy="${y}" r="2.800"/>`);});
[[744,486],[1049,486],[820,486],[957,486],[744,567],[1049,567],[847,567],[919,567],[897,366],[897,687]].forEach(([x,y])=>out.push(`<circle cx="${x}" cy="${y}" r="3.800" fill="none" stroke="#f01818" stroke-width="1.800"/><circle cx="${x}" cy="${y}" r="1.800" fill="none" stroke="#000"/>`));
[873,892,922.500].forEach(x=>{R(x-1.500,366,x+1.500,371,'#000');R(x-1.500,683,x+1.500,688,'#000');});
[[741,526],[1052,526],[896,526],[896,359],[896,693]].forEach(([x,y])=>R(x-3,y-3,x+3,y+3,'#ff9d1e'));
P('M890 386h12l-6-6ZM890 668h12l-6 6ZM851 437v12l-5-6ZM943 437v12l5-6ZM851 604v12l-5-6ZM943 604v12l5-6Z','#ff9d1e','none');
[747,778,808,836,866,920,975,1006,1037].forEach(x=>R(x-2,525,x+2,529,'#8a8f90'));
L(727,670.5,770,670.5,'#b5aaa5',2); L(741,646,741,686,'#b5aaa5',3);
// slope marks
const slope=(x,y,t,r)=>T(x,y,t,{c:BL,s:9,r});
slope(880,413.500,'38°');slope(916,413.500,'38°');slope(880,631,'38°');slope(915,631,'38°');slope(797,441,'38°',-90);slope(994,590,'38°',-90);
P('M872 420.500h18M906 420.500h18M872 637.500h18M906 637.500h18M803.500 432v18M1000.500 582v16','none',BL);
P('M870 420.500l4-2v4ZM924 420.500l-4-2v4ZM870 637.500l4-2v4ZM924 637.500l-4-2v4ZM803.500 430l-2 4h4ZM1000.500 600l-2-4h4Z',BL,BL);

// member labels
[759,789,820,835,862.500,902,932,942,972,1002,1034].forEach(x=>T(x,464,'KB1',{s:9,r:-90}));
[[856,'B2'],[873,'DB1'],[893,'DB1'],[923,'DB1'],[938,'B2']].forEach(([x,t])=>{T(x,351,t,{s:9,r:-90});T(x,702,t,{s:9,r:-90});});
[[751,'H2'],[781.500,'H1a'],[813,'H1a'],[843,'H1b'],[951,'H1b'],[981,'H1a'],[1012,'H1a'],[1043,'H2']].forEach(([x,t])=>T(x,713,t,{s:9,r:-90}));
[[871,'H3b'],[895,'H3a'],[921,'H3a']].forEach(([x,t])=>T(x,612,t,{s:9,r:-90}));
[401,428.500,456,597,624.500,652.500,680].forEach(y=>T(828,y,'S1',{s:9,c:'#333'}));
T(908,480,'ST1a',{s:9}); T(908,560,'ST1b',{s:9}); T(821,492,'S12',{s:9}); T(957,492,'S12',{s:9}); T(917,573,'S13',{s:9});
T(1066,486,'BA2',{s:9}); T(1066,567,'BA1',{s:9}); T(743,371,'*)',{s:9}); T(848,371,'*)',{s:9}); T(746,684,'*)',{s:9});
T(766,379,'WiBa1',{s:6,c:'#666'}); T(828,379,'WiBa1',{s:6,c:'#666'}); T(766,674,'WiBa1',{s:6,c:'#666'}); T(828,672,'WiBa1',{s:6,c:'#666'});
T(741,617,'100',{s:7,c:BL}); T(1037,627,'100',{s:7,c:BL}); P('M744 620h8M1042 631h8M747.500 615v10M1046.500 626v10','none',BL);

// dimension chains
function hdim(y,xs,labels,c=BL){
  L(xs[0]-4,y,xs[xs.length-1]+4,y,c);
  xs.forEach(x=>{L(x,y-5,x,y+9,c,c===FD?.7:1); L(x-2,y+2,x+2,y-2,c);});
  labels.forEach(([x,t,dy])=>T(x,y+(dy||-4),t,{s:7,c}));
}
function vdim(x,ys,labels,c=BL){
  L(x,ys[0]-4,x,ys[ys.length-1]+4,c);
  ys.forEach(y=>{L(x-9,y,x+5,y,c,c===FD?.7:1); L(x-2,y+2,x+2,y-2,c);});
  labels.forEach(([y,t])=>T(x-4,y,t,{s:7,c,r:-90}));
}
const mid=[[857,'917'],[883,'767'],[908,'855'],[935,'960']];
hdim(259.5,[727.5,1066.5],[[897,'11070']]);
hdim(282.5,[727.5,747.5,1046.5,1066.5],[[737,'660'],[897,'9750'],[1056,'660']]);
hdim(301.5,[727.5,736.5,741.5,747.5,848.5,860.5,933.5,945.5,1046.5,1052.5,1057.5,1066.5],[[720,'300'],[744,'200'],[739,'160',4],[798,'3300'],[854,'380'],[897,'2390'],[939,'380'],[996,'3300'],[1050,'200'],[1055,'160',4],[1074,'300']]);
hdim(321.5,[727.5,741.5,751.5,781.5,812.5,843.5,871.5,894.5,921.5,950.5,981.5,1011.5,1042.5,1052.5,1066.5],[[720,'460'],[746,'330'],[766,'990'],[797,'2x1000'],...mid,[996,'3x1000'],[1047,'330'],[1074,'460']]);
hdim(736.5,[741.5,749.5,752.5,779.5,782.5,811.5,813.5,841.5,844.5,948.5,951.5,979.5,982.5,1010.5,1013.5,1041.5,1043.5,1052.5],[[734,'300'],[751,'60'],[766,'920'],[781,'80'],[797,'920'],[827,'920'],[843,'80'],[897,'3420'],[950,'80'],[966,'920'],[981,'80'],[996,'920'],[1011,'80'],[1027,'930'],[1042,'60'],[1059,'300']]);
hdim(750.5,[736.5,751.5,781.5,812.5,843.5,871.5,894.5,921.5,950.5,981.5,1011.5,1042.5,1057.5],[[744,'490'],[766,'990'],[797,'2x1000'],...mid,[996,'3x1000'],[1050,'490']]);
hdim(767.5,[727.5,736.5,747.5,848.5,860.5,933.5,945.5,1046.5,1057.5,1066.5],[[720,'300'],[742,'360'],[798,'3300'],[855,'380'],[897,'2390'],[939,'380'],[996,'3300'],[1051,'360'],[1074,'300']]);
hdim(782.5,[727.5,741.5,853.5,1066.5],[[734,'460'],[797,'3660'],[960,'6950']],FD);
hdim(797.5,[727.5,1066.5],[[897,'11070']],FD);
vdim(652.5,[352.5,388.5,664.5,701.5],[[370,'1190'],[525,'9000'],[682,'1190']]);
vdim(673.5,[352.5,382.5,388.5,664.5,670.5,701.5],[[367,'990'],[386,'200'],[525,'9000'],[667,'200'],[685,'990']]);
vdim(695.5,[352.5,382.5,388.5,483.5,488.5,564.5,569.5,664.5,670.5,701.5],[[367,'990'],[386,'200'],[436,'3092'],[486,'160'],[525,'2495'],[567,'160'],[616,'3093'],[667,'200'],[685,'990']]);
vdim(1113.5,[352.5,359.5,377.5,388.5,664.5,675.5,701.5],[[345,'230'],[368,'600'],[383,'360'],[525,'9000'],[670,'360'],[690,'830']]);
vdim(1129.5,[352.5,382.5,670.5,701.5],[[367,'990'],[525,'9400'],[685,'990']],FD);
vdim(1144.5,[352.5,701.5],[[525,'11380']],FD);
vdim(964.5,[364.5,373.5,401.5,429.5,456.5,483.5,515.5],[[357,'310'],[415,'4x900'],[499,'1023']]);
vdim(972.5,[537.5,568.5,596.5,624.5,652.5,679.5,689.5],[[553,'1023'],[638,'4x900'],[697,'310']]);

// notes under the plan
const N=(x,y,rows)=>rows.forEach((t,i)=>T(x,y+i*12.4,t,{s:11,a:'start'}));
N(659,849,['Alle nicht nachgewiesenen Querschnitte','und Anschlüsse sind konstruktiv und nach','den anerkannten Regeln der Technik zu','wählen und auszuführen.']);
N(658,917,['Die Dachlatten sind Teil der Aussteifungs-','konstruktion. Sie sind mit einem Beiholz','auf dem Sparren, oder um mindestens','2 Binderabstände versetzt zu stoßen.']);
N(925,850,['Windrispenband 60 x 1,5 mm mit','15 Stck. Kammnägeln CNA 4,0x50','an den Enden vernageln.']);
N(926,904,['*) Beiholz 10/10 cm, l = 65 cm am Obergurt']); N(938,916,['Anschluss mit 14 Stck. Nägeln 4,6x130 mm']);
N(971,948,['Aussteifungskoffer']);
out.push('<circle cx="948" cy="948.500" r="13.800" fill="none" stroke="#000"/>');
[[923,844],[1096,844],[923,881],[1096,881]].forEach(([x,y])=>R(x-3.500,y-3.500,x+4.500,y+4.500,'#8080ff',BL));
// cursor cross hair
L(819.5,216,819.5,980,'#8c8c8c'); L(247,487.500,1486,487.500,'#8c8c8c');
T(820,989,'2557,18',{s:16,c:'#999'}); T(1517,487,'5988,23',{s:16,c:'#999'});
document.getElementById('plan').innerHTML = out.join('');
</script>
</body>
</html>
